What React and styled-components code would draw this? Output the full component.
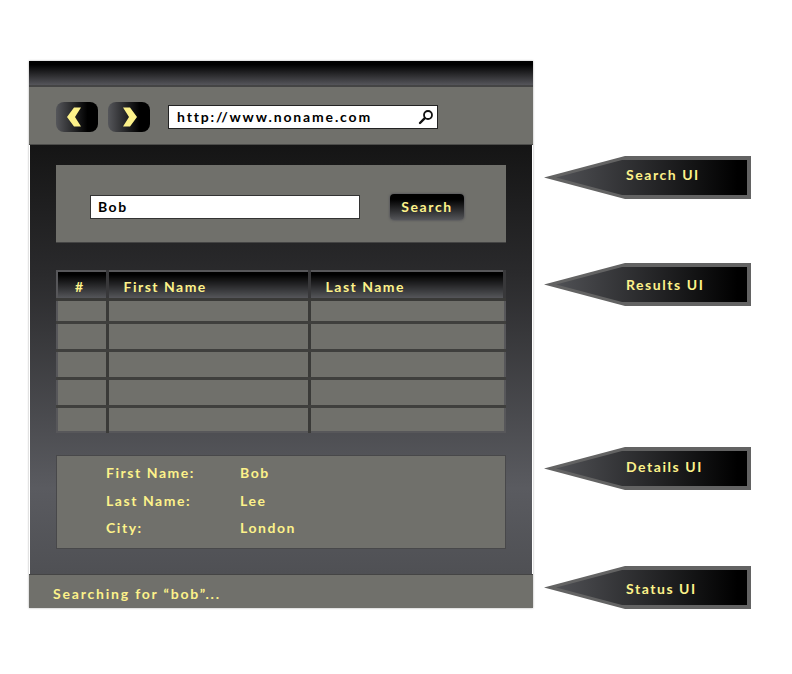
import React from "react";
import styled, { createGlobalStyle } from "styled-components";

const GlobalStyle = createGlobalStyle`
  html, body {
    margin: 0;
    padding: 0;
    background: #fff;
    font-family: "Lato", "Open Sans", sans-serif;
  }
`;

const callouts = [
  { label: "Search UI", top: 95, above: 6, below: 0 },
  { label: "Results UI", top: 64, above: 0, below: 0 },
  { label: "Details UI", top: 141, above: 4, below: 0 },
  { label: "Status UI", top: 76, above: 0, below: 2 },
];

const rowHeights = [22, 26, 26, 26, 24];

const details = [
  { label: "First Name:", value: "Bob" },
  { label: "Last Name:", value: "Lee" },
  { label: "City:", value: "London" },
];

const App = () => {
  return (
    <Page>
      <GlobalStyle />
      <Browser>
        <TitleBar />
        <Toolbar>
          <NavButton $right={6}>
            <svg width="16" height="20" viewBox="0 0 16 20">
              <polygon points="8,0.5 15,0.5 9,10 15,19.5 8,19.5 1,10" fill="#fdf28a" />
            </svg>
          </NavButton>
          <NavButton $left={2}>
            <svg width="16" height="20" viewBox="0 0 16 20">
              <polygon points="1,0.5 8,0.5 15,10 8,19.5 1,19.5 7,10" fill="#fdf28a" />
            </svg>
          </NavButton>
          <UrlBar>
            <UrlText>http://www.noname.com</UrlText>
            <svg width="16" height="16" viewBox="0 0 16 16">
              <circle cx="10" cy="6" r="4" fill="none" stroke="#111" strokeWidth="1.8" />
              <line x1="6.6" y1="9.4" x2="2" y2="14" stroke="#111" strokeWidth="2.4" strokeLinecap="round" />
            </svg>
          </UrlBar>
        </Toolbar>
        <Content>
          <SearchPanel>
            <SearchField>Bob</SearchField>
            <SearchButton>Search</SearchButton>
          </SearchPanel>
          <Results>
            <thead>
              <tr>
                <HeadCell $width={50} $center>#</HeadCell>
                <HeadCell $width={202}>First Name</HeadCell>
                <HeadCell>Last Name</HeadCell>
              </tr>
            </thead>
            <tbody>
              {rowHeights.map((h, i) => (
                <tr key={i} style={{ height: h }}>
                  <Cell />
                  <Cell />
                  <Cell />
                </tr>
              ))}
            </tbody>
          </Results>
          <DetailsPanel>
            {details.map((d) => (
              <React.Fragment key={d.label}>
                <DetailText>{d.label}</DetailText>
                <DetailText>{d.value}</DetailText>
              </React.Fragment>
            ))}
          </DetailsPanel>
        </Content>
        <StatusBar>Searching for “bob”...</StatusBar>
      </Browser>
      <Callouts>
        {callouts.map((c) => (
          <Callout key={c.label} $top={c.top}>
            <CalloutInner $above={c.above} $below={c.below}>{c.label}</CalloutInner>
          </Callout>
        ))}
      </Callouts>
    </Page>
  );
};

const Page = styled.div`
  display: flex;
  align-items: flex-start;
  gap: 11px;
  width: 792px;
  height: 674px;
  box-sizing: border-box;
  padding: 61px 0 0 29px;
  overflow: hidden;
`;
const Browser = styled.div`
  display: flex;
  flex-direction: column;
  width: 504px;
  box-shadow: 0 0 2px rgba(0, 0, 0, 0.35);
`;
const TitleBar = styled.div`
  height: 24px;
  background: linear-gradient(#000 15%, #55555a);
  border-bottom: 2px solid #444;
`;
const Toolbar = styled.div`
  display: flex;
  align-items: center;
  gap: 10px;
  height: 58px;
  box-sizing: border-box;
  padding: 2px 0 0 27px;
  background: #70706b;
  border-bottom: 1px solid #4c4c4a;
`;
const NavButton = styled.div`
  display: flex;
  align-items: center;
  justify-content: center;
  width: 42px;
  height: 30px;
  box-sizing: border-box;
  padding: 0 ${(p) => p.$right || 0}px 0 ${(p) => p.$left || 0}px;
  border-radius: 8px;
  background: linear-gradient(90deg, #55565a, #000 75%);
`;
const UrlBar = styled.div`
  display: flex;
  align-items: center;
  justify-content: space-between;
  width: 270px;
  height: 24px;
  box-sizing: border-box;
  margin-left: 8px;
  padding: 0 3px 0 8px;
  background: #fff;
  border: 1px solid #222;
  border-bottom-width: 1.5px;
`;
const UrlText = styled.span`
  font-size: 14px;
  font-weight: 700;
  letter-spacing: 1.85px;
  color: #000;
`;
const Content = styled.div`
  display: flex;
  flex-direction: column;
  margin: 0 1px;
  padding: 20px 26px 25px;
  background: linear-gradient(#151515, #2a2a2c 30%, #5a5b60 80%, #4f5054);
`;
const SearchPanel = styled.div`
  display: flex;
  align-items: center;
  height: 78px;
  box-sizing: border-box;
  padding: 6px 0 0 34px;
  background: #70706b;
  border-bottom: 1px solid #444;
`;
const SearchField = styled.div`
  display: flex;
  align-items: center;
  width: 270px;
  height: 24px;
  box-sizing: border-box;
  padding-left: 7px;
  background: #fff;
  border: 1px solid #333;
  font-size: 14px;
  font-weight: 700;
  letter-spacing: 1.5px;
  color: #000;
`;
const SearchButton = styled.div`
  display: flex;
  align-items: center;
  justify-content: center;
  width: 74px;
  height: 26px;
  margin-left: 30px;
  border-radius: 4px;
  background: linear-gradient(#000 20%, #55565a);
  box-shadow: 0 0 2px 1px #5c5c5e;
  font-size: 14px;
  font-weight: 700;
  letter-spacing: 1.6px;
  color: #fdf28a;
`;
const Results = styled.table`
  width: 450px;
  height: 163px;
  margin-top: 27px;
  border-collapse: collapse;
  table-layout: fixed;
  border: 2px solid #57575a;
`;
const HeadCell = styled.th`
  width: ${(p) => (p.$width ? p.$width + "px" : "auto")};
  height: 28px;
  box-sizing: border-box;
  padding: 4px ${(p) => (p.$center ? "4px" : "0")} 0 ${(p) => (p.$center ? "0" : "15px")};
  background: linear-gradient(#000 10%, #55565a);
  border-right: 3px solid #38383a;
  border-bottom: 3px solid #3a3a38;
  font-size: 14px;
  font-weight: 700;
  letter-spacing: 1.5px;
  text-align: ${(p) => (p.$center ? "center" : "left")};
  color: #fdf28a;
`;
const Cell = styled.td`
  padding: 0;
  background: #70706b;
  border-right: 3px solid #3a3a38;
  border-bottom: 3px solid #3f3f3d;
  tr:last-child & {
    border-bottom: 1px solid #555;
  }
  &:last-child {
    border-right: none;
  }
`;
const DetailsPanel = styled.div`
  display: grid;
  grid-template-columns: 134px 1fr;
  grid-auto-rows: 27.5px;
  align-items: center;
  height: 94px;
  box-sizing: border-box;
  margin-top: 22px;
  padding: 3px 0 0 49px;
  background: #70706b;
  border: 1px solid #48484a;
`;
const DetailText = styled.div`
  font-size: 14px;
  font-weight: 700;
  letter-spacing: 1.55px;
  color: #fdf28a;
`;
const StatusBar = styled.div`
  display: flex;
  align-items: center;
  height: 34px;
  box-sizing: border-box;
  padding: 4px 0 0 24px;
  background: #70706b;
  border-top: 1px solid #444;
  font-size: 14px;
  font-weight: 700;
  letter-spacing: 1.8px;
  color: #fdf28a;
`;
const Callouts = styled.div`
  display: flex;
  flex-direction: column;
`;
const Callout = styled.div`
  display: flex;
  align-items: center;
  justify-content: flex-end;
  width: 207px;
  height: 43px;
  box-sizing: border-box;
  margin-top: ${(p) => p.$top}px;
  padding-right: 4px;
  background: #636363;
  clip-path: polygon(0 50%, 81px 0, 100% 0, 100% 100%, 81px 100%);
`;
const CalloutInner = styled.div`
  display: flex;
  align-items: center;
  width: 191px;
  height: 35px;
  box-sizing: border-box;
  padding: ${(p) => p.$below}px 0 ${(p) => p.$above}px 70px;
  background: linear-gradient(90deg, #505155, #000 95%);
  clip-path: polygon(0 50%, 66px 0, 100% 0, 100% 100%, 66px 100%);
  font-size: 14px;
  font-weight: 700;
  letter-spacing: 1.55px;
  color: #fdf28a;
`;

export default App;
